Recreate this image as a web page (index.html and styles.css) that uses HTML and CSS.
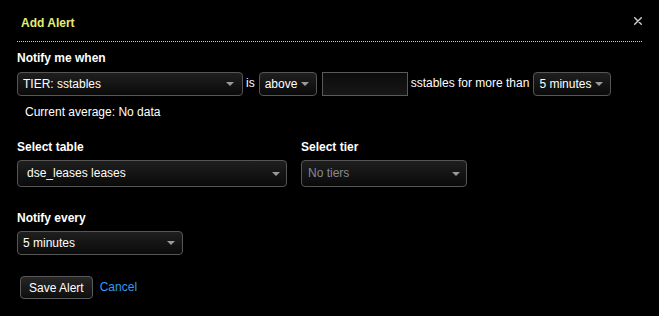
FILE: index.html
```html
<!DOCTYPE html>
<html lang="en">
<head>
    <meta charset="UTF-8">
    <meta name="viewport" content="width=device-width, initial-scale=1.0">
    <title>Add Alert</title>
    <link rel="stylesheet" href="styles.css">
</head>
<body>
    <div id="alert-modal">
        <!-- Header -->
        <div class="modal-header">
            <h3 class="modal-title">Add Alert</h3>
            <button class="close-button" aria-label="Close">
                <svg width="8" height="8" viewBox="0 0 8 8">
                    <path d="M0.7 0.7 L7.3 7.3 M7.3 0.7 L0.7 7.3" stroke="#cfcfcf" stroke-width="1.4" stroke-linecap="round"/>
                </svg>
            </button>
        </div>

        <div class="modal-body">
            <!-- Condition -->
            <div class="field-label">Notify me when</div>
            <div class="condition-row">
                <div class="select select-metric">
                    <span>TIER: sstables</span>
                    <svg class="arrow" width="8" height="4" viewBox="0 0 8 4"><path d="M0 0 H8 L4 4 Z" fill="#9a9a9a"/></svg>
                </div>
                <span class="row-text">is</span>
                <div class="select select-operator">
                    <span>above</span>
                    <svg class="arrow" width="8" height="4" viewBox="0 0 8 4"><path d="M0 0 H8 L4 4 Z" fill="#9a9a9a"/></svg>
                </div>
                <input type="text" class="threshold-input" />
                <span class="row-text">sstables for more than</span>
                <div class="select select-duration">
                    <span>5 minutes</span>
                    <svg class="arrow" width="8" height="4" viewBox="0 0 8 4"><path d="M0 0 H8 L4 4 Z" fill="#9a9a9a"/></svg>
                </div>
            </div>
            <div class="current-average">Current average: No data</div>

            <!-- Table and tier -->
            <div class="pick-row">
                <div class="pick-group">
                    <div class="field-label">Select table</div>
                    <div class="select select-large select-table">
                        <span>dse_leases leases</span>
                        <svg class="arrow" width="8" height="4" viewBox="0 0 8 4"><path d="M0 0 H8 L4 4 Z" fill="#9a9a9a"/></svg>
                    </div>
                </div>
                <div class="pick-group">
                    <div class="field-label">Select tier</div>
                    <div class="select select-large select-tier disabled">
                        <span>No tiers</span>
                        <svg class="arrow" width="8" height="4" viewBox="0 0 8 4"><path d="M0 0 H8 L4 4 Z" fill="#9a9a9a"/></svg>
                    </div>
                </div>
            </div>

            <!-- Frequency -->
            <div class="field-label notify-label">Notify every</div>
            <div class="select select-every">
                <span>5 minutes</span>
                <svg class="arrow" width="8" height="4" viewBox="0 0 8 4"><path d="M0 0 H8 L4 4 Z" fill="#9a9a9a"/></svg>
            </div>

            <!-- Actions -->
            <div class="actions">
                <button id="save-alert-button">Save Alert</button>
                <a href="#" class="cancel-link">Cancel</a>
            </div>
        </div>
    </div>
</body>
</html>
```

FILE: styles.css
```css
body {
    margin: 0;
    background-color: #000;
    font-family: "Liberation Sans", Arial, sans-serif;
    font-size: 12px;
    color: #fff;
}

#alert-modal {
    width: 659px;
    height: 316px;
    background-color: #000;
}

/* Header with title and close icon */
.modal-header {
    display: flex;
    justify-content: space-between;
    align-items: flex-start;
    margin: 0 17px;
    padding: 16px 0 11px 4px;
    border-bottom: 1px dotted #cfcfcf;
}

.modal-title {
    margin: 0;
    font-size: 12px;
    line-height: 14px;
    font-weight: bold;
    color: #e3ee74;
}

.close-button {
    display: flex;
    padding: 0;
    margin-top: 1px;
    background: none;
    border: none;
    cursor: pointer;
}

.modal-body {
    padding: 9px 17px 0;
}

.field-label {
    font-weight: bold;
    line-height: 14px;
}

/* Select boxes */
.select {
    display: flex;
    justify-content: space-between;
    align-items: center;
    box-sizing: border-box;
    height: 24px;
    padding: 0 7px 1px 5px;
    border: 1px solid #565656;
    border-radius: 4px;
    background: linear-gradient(#1f1f1f, #0a0a0a);
    line-height: 14px;
    white-space: nowrap;
}

.select .arrow {
    flex-shrink: 0;
    margin-top: 1px;
}

.select-large {
    height: 27px;
    padding-left: 6px;
    padding-right: 6px;
}

.select-table {
    padding-left: 9px;
}

.disabled {
    color: #8a8a8a;
}

.condition-row {
    display: flex;
    align-items: center;
    margin-top: 7px;
}

.select-metric {
    width: 226px;
    padding-right: 8px;
}

.select-operator {
    width: 58px;
}

.select-duration {
    width: 78px;
}

.row-text {
    margin: 0 4px 0 3px;
    padding-bottom: 3px;
}

.threshold-input {
    box-sizing: border-box;
    width: 86px;
    height: 24px;
    margin: 0 0 0 5px;
    border: 1px solid #5a5a5a;
    background: linear-gradient(#0c0c0c, #171717);
    color: #fff;
    outline: none;
}

.current-average {
    margin: 9px 0 0 8px;
    line-height: 14px;
}

.pick-row {
    display: flex;
    gap: 14px;
    margin-top: 21px;
}

.pick-group .select {
    margin-top: 6px;
}

.select-table {
    width: 270px;
}

.select-tier {
    width: 166px;
}

.notify-label {
    margin-top: 24px;
}

.select-every {
    width: 166px;
    margin-top: 6px;
}

/* Buttons */
.actions {
    display: flex;
    align-items: flex-start;
    margin-top: 21px;
    padding-left: 3px;
}

#save-alert-button {
    height: 23px;
    padding: 0 8px;
    font-family: inherit;
    font-size: 12px;
    color: #fff;
    background: linear-gradient(#262626, #0e0e0e);
    border: 1px solid #5a5a5a;
    border-radius: 4px;
    cursor: pointer;
}

.cancel-link {
    margin: 4px 0 0 7px;
    color: #2b9cf6;
    text-decoration: none;
    line-height: 14px;
}
```
